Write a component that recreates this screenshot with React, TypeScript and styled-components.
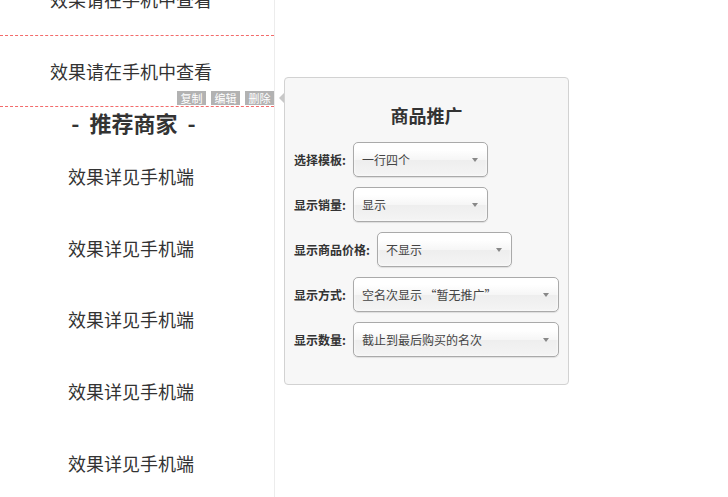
import React from 'react';
import styled, { createGlobalStyle } from 'styled-components';

const GlobalStyle = createGlobalStyle`
  html, body {
    margin: 0;
    padding: 0;
    background: #fff;
    height: 100%;
    overflow: hidden;
  }
  body {
    font-family: "Noto Sans CJK SC", "Liberation Sans", sans-serif;
    color: #333;
  }
`;

const Page = styled.div`
  position: relative;
  display: flex;
  width: 728px;
  height: 497px;
  overflow: hidden;
`;

// phone preview column, scrolled a bit down
const Preview = styled.div`
  width: 274px;
  height: 100%;
  border-right: 1px solid #ececec;
  overflow: hidden;
`;

const PreviewInner = styled.div`
  margin-top: -37px;
  padding-right: 12px;
`;

const Module = styled.div<{ $selected?: boolean }>`
  position: relative;
  height: 72px;
  box-sizing: border-box;
  display: flex;
  align-items: center;
  justify-content: center;
  font-size: 18px;
  color: #333;
  margin-right: -12px;
  padding-right: 12px;
  border-top: ${({ $selected }) => ($selected ? '1px dashed #f36b6b' : 'none')};
  border-bottom: ${({ $selected }) => ($selected ? '1px dashed #f36b6b' : 'none')};
`;

const Actions = styled.div`
  position: absolute;
  right: 0;
  bottom: 1px;
  display: flex;
  gap: 5px;
`;

const ActionBtn = styled.span`
  display: block;
  width: 29px;
  height: 14px;
  line-height: 14px;
  text-align: center;
  background: #b2b2b2;
  color: #fff;
  font-size: 11px;
`;

const SectionTitle = styled.div`
  height: 33px;
  box-sizing: border-box;
  padding-bottom: 3px;
  display: flex;
  align-items: center;
  justify-content: center;
  font-size: 22px;
  font-weight: 700;
  color: #333;
  white-space: pre;
  padding-left: 5px;
`;

const Item = styled.div`
  height: 71.75px;
  display: flex;
  align-items: center;
  justify-content: center;
  font-size: 18px;
  color: #333;
`;

// popover editor
const Popover = styled.div`
  position: absolute;
  left: 284px;
  top: 77px;
  width: 285px;
  box-sizing: border-box;
  background: #f7f7f7;
  border: 1px solid #d2d2d2;
  border-radius: 4px;
  padding: 26px 9px 27px 9px;

  &::before {
    content: '';
    position: absolute;
    left: -6px;
    top: 15px;
    border-top: 5px solid transparent;
    border-bottom: 5px solid transparent;
    border-right: 5px solid #c8c8c8;
  }
`;

const PopTitle = styled.div`
  height: 22px;
  line-height: 22px;
  text-align: center;
  font-size: 18px;
  font-weight: 700;
  color: #333;
  margin-bottom: 16px;
`;

const Form = styled.div`
  display: flex;
  flex-direction: column;
  gap: 10px;
`;

const Row = styled.div`
  display: flex;
  align-items: center;
  height: 35px;
`;

const Label = styled.span`
  font-size: 12px;
  font-weight: 700;
  color: #333;
  margin-right: 7px;
  white-space: nowrap;
`;

const Select = styled.div<{ $wide?: boolean }>`
  position: relative;
  width: ${({ $wide }) => ($wide ? '207px' : '135px')};
  height: 35px;
  box-sizing: border-box;
  border: 1px solid #aaa;
  border-radius: 5px;
  background: linear-gradient(#fff 20%, #f6f6f6 50%, #eee 52%, #f4f4f4 100%);
  box-shadow: 0 0 3px #fff inset, 0 1px 1px rgba(0, 0, 0, 0.1);
  display: flex;
  align-items: center;
  padding-left: 8px;
  font-size: 12px;
  color: #444;

  &::after {
    content: '';
    position: absolute;
    right: 9px;
    top: 15px;
    border-left: 3px solid transparent;
    border-right: 3px solid transparent;
    border-top: 4px solid #888;
  }
`;

const rows = [
  { label: '选择模板:', value: '一行四个', wide: false },
  { label: '显示销量:', value: '显示', wide: false },
  { label: '显示商品价格:', value: '不显示', wide: false },
  { label: '显示方式:', value: '空名次显示 “暂无推广”', wide: true },
  { label: '显示数量:', value: '截止到最后购买的名次', wide: true },
];

const App: React.FC = (): JSX.Element => {
  return (
    <>
      <GlobalStyle />
      <Page>
        <Preview>
          <PreviewInner>
            <Module>效果请在手机中查看</Module>
            <Module $selected>
              效果请在手机中查看
              <Actions>
                <ActionBtn>复制</ActionBtn>
                <ActionBtn>编辑</ActionBtn>
                <ActionBtn>删除</ActionBtn>
              </Actions>
            </Module>
            <SectionTitle>{'-  推荐商家  -'}</SectionTitle>
            {[0, 1, 2, 3, 4].map((i) => (
              <Item key={i}>效果详见手机端</Item>
            ))}
          </PreviewInner>
        </Preview>
        <Popover>
          <PopTitle>商品推广</PopTitle>
          <Form>
            {rows.map((r) => (
              <Row key={r.label}>
                <Label>{r.label}</Label>
                <Select $wide={r.wide}>{r.value}</Select>
              </Row>
            ))}
          </Form>
        </Popover>
      </Page>
    </>
  );
};

export default App;
